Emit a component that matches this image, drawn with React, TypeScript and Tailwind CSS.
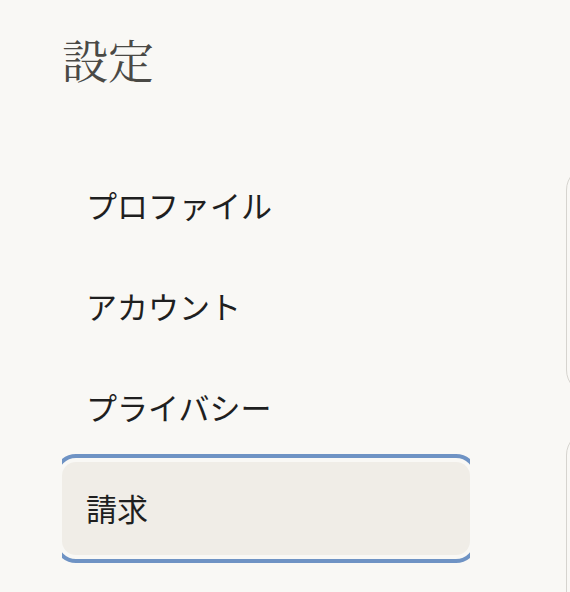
import { useState } from 'react';

const items = ['プロファイル', 'アカウント', 'プライバシー', '請求'];

export default function App() {
  const [active, setActive] = useState(3);

  return (
    <div className="h-[592px] w-[570px] overflow-hidden bg-[#f9f8f5] flex">
      {/* Sidebar */}
      <aside className="shrink-0 w-[470px] pl-[62px] pt-[30px]">
        <h1 className="text-[46px] leading-[56px] text-[#4a4945] font-normal font-['Noto_Serif_CJK_JP','Noto_Serif_JP','Noto_Sans_CJK_JP',serif]">
          設定
        </h1>
        <nav className="mt-[73px] pb-4 flex flex-col gap-2 overflow-hidden">
          {items.map((label, i) => (
            <button
              key={label}
              onClick={() => setActive(i)}
              className={
                i === active
                  ? 'h-[93px] w-full shrink-0 rounded-[14px] bg-[#f0ede7] pl-6 text-left text-[31px] text-[#1f1f1f] outline-[4px] outline-solid outline-[#6f93c4] outline-offset-[4px] font-["Noto_Sans_CJK_JP",sans-serif]'
                  : 'h-[93px] w-full shrink-0 rounded-[14px] pl-6 text-left text-[31px] text-[#1f1f1f] font-["Noto_Sans_CJK_JP",sans-serif]'
              }
            >
              {label}
            </button>
          ))}
        </nav>
      </aside>

      {/* Main content (cards peeking in from the right) */}
      <main className="ml-[96px] pt-[166px] flex flex-col gap-[37px] shrink-0">
        <div className="w-[400px] h-[228px] shrink-0 rounded-[24px] border border-[#d6d4cf] bg-[#f9f8f5]" />
        <div className="w-[400px] h-[300px] shrink-0 rounded-[24px] border border-[#d6d4cf] bg-[#f9f8f5]" />
      </main>
    </div>
  );
}
